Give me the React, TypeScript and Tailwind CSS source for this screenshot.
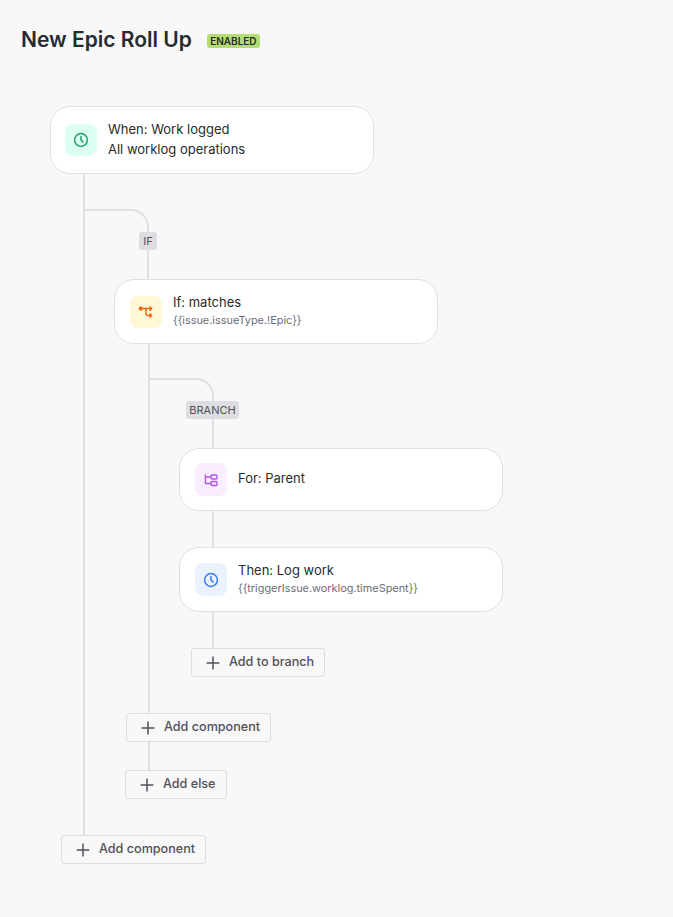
import React from "react";

const font = { fontFamily: "Inter, 'Liberation Sans', sans-serif" };

function Clock({ color }: { color: string }) {
  return (
    <svg width="16" height="16" viewBox="0 0 16 16" fill="none" stroke={color} strokeWidth="1.5" strokeLinecap="round" strokeLinejoin="round">
      <circle cx="8" cy="8" r="6.4" />
      <path d="M8 4.6V8l2 1.9" />
    </svg>
  );
}

function BranchIcon() {
  return (
    <svg width="16" height="16" viewBox="0 0 16 16" fill="none" stroke="#e56910" strokeWidth="1.5" strokeLinecap="round" strokeLinejoin="round">
      <circle cx="2.8" cy="4.6" r="1.4" fill="#e56910" />
      <path d="M4.2 4.6h9.3M8 4.6v5.5c0 .9.5 1.4 1.4 1.4h4.1" />
      <path d="M12 3 13.6 4.6 12 6.2M12 9.9l1.6 1.6-1.6 1.6" />
    </svg>
  );
}

function ParentIcon() {
  return (
    <svg width="16" height="16" viewBox="0 0 16 16" fill="none" stroke="#af59e1" strokeWidth="1.4" strokeLinejoin="round">
      <path d="M2.4 2.3v9.2h5.6M2.4 5h5.6" />
      <rect x="8" y="3" width="6" height="4" rx="1" />
      <rect x="8" y="9.5" width="6" height="4" rx="1" />
    </svg>
  );
}

function Card({ h, pl, boxClass, icon, title, sub, subBig }: { h: string; pl: string; boxClass: string; icon: React.ReactNode; title: string; sub?: string; subBig?: boolean }) {
  return (
    <div className={`${h} ${pl} w-[324px] shrink-0 rounded-[20px] border border-[#dfe0e3] bg-white flex items-center gap-[11px]`}>
      <div className={`${boxClass} w-8 rounded-[8px] flex items-center justify-center shrink-0`}>{icon}</div>
      <div className={subBig ? "flex flex-col text-[#292a2e] pb-[2px]" : "flex flex-col text-[#292a2e] pb-[3px]"}>
        <span className="text-[13px] leading-[20px]">{title}</span>
        {sub &&
          (subBig ? (
            <span className="text-[13px] leading-[20px]">{sub}</span>
          ) : (
            <span className="text-[10.9px] leading-[16px] text-[#6b6e76]">{sub}</span>
          ))}
      </div>
    </div>
  );
}

function AddButton({ label, w, ml }: { label: string; w: string; ml: string }) {
  return (
    <button className={`${w} ${ml} h-[29px] shrink-0 flex items-center pl-[13px] gap-[8px] rounded-[3px] border border-[#dcdde0] bg-[#f8f8f8] text-[12.6px] font-medium text-[#505258]`}>
      <svg width="16" height="16" viewBox="0 0 16 16" fill="none" stroke="#505258" strokeWidth="1.5">
        <path d="M8 1.6v12.8M1.6 8h12.8" />
      </svg>
      <span>{label}</span>
    </button>
  );
}

function Curve({ h, badge, badgeClass }: { h: string; badge: string; badgeClass: string }) {
  return (
    <div className={`${h} w-[64px] relative border-t-2 border-r-2 border-[#dfe0e5] rounded-tr-[18px]`}>
      <span className={`${badgeClass} absolute h-[18px] flex items-center justify-center rounded-[3px] bg-[#dddee1] text-[11px] text-[#505258]`}>{badge}</span>
    </div>
  );
}

function Stem() {
  return <div className="ml-[33px] w-0.5 h-[36px] bg-[#dfe0e5]" />;
}

export default function App() {
  return (
    <div style={font} className="w-[673px] h-[917px] bg-[#f8f8f8] overflow-hidden">
      <div className="pt-[26px] pl-[21px] flex items-center gap-[15px] h-[54px]">
        <h1 className="text-[21px] leading-[28px] font-semibold text-[#292a2e]">New Epic Roll Up</h1>
        <span className="h-[14px] w-[53px] mt-[2px] flex items-center justify-center rounded-[3px] bg-[#b3df72] text-[10px] font-semibold text-[#292a2e]">ENABLED</span>
      </div>

      <div className="mt-[52px] ml-[50px]">
        <Card
          h="h-[68px]"
          pl="pl-[14px]"
          boxClass="h-8 bg-[#dcfff1]"
          icon={<Clock color="#22a06b" />}
          title="When: Work logged"
          sub="All worklog operations"
          subBig
        />
      </div>

      <div className="ml-[83px] border-l-2 border-[#dfe0e5] pt-[35px] pb-[36px]">
        <Curve h="h-[70px]" badge="IF" badgeClass="w-[18px] top-[21px] -right-[10px]" />
        <div className="ml-[29px]">
          <Card
            h="h-[65px]"
            pl="pl-[15px]"
            boxClass="h-8 bg-[#fff7d6]"
            icon={<BranchIcon />}
            title="If: matches"
            sub="{{issue.issueType.!Epic}}"
          />
        </div>

        <div className="ml-[63px] border-l-2 border-[#dfe0e5] pt-[34px] pb-[28px]">
          <Curve h="h-[70px]" badge="BRANCH" badgeClass="w-[53px] top-[21px] -right-[27px]" />
          <div className="ml-[29px]">
            <Card h="h-[63px]" pl="pl-[15px]" boxClass="h-[33px] bg-[#f8eefe]" icon={<ParentIcon />} title="For: Parent" />
            <Stem />
            <Card
              h="h-[65px]"
              pl="pl-[15px]"
              boxClass="h-[33px] bg-[#e9f2fe]"
              icon={<Clock color="#357de8" />}
              title="Then: Log work"
              sub="{{triggerIssue.worklog.timeSpent}}"
            />
            <Stem />
            <AddButton label="Add to branch" w="w-[134px]" ml="ml-[12px]" />
          </div>
          <div className="mt-[36px]">
            <AddButton label="Add component" w="w-[145px]" ml="-ml-[24px]" />
          </div>
        </div>

        <AddButton label="Add else" w="w-[102px]" ml="ml-[40px]" />
      </div>

      <AddButton label="Add component" w="w-[145px]" ml="ml-[61px]" />
    </div>
  );
}
